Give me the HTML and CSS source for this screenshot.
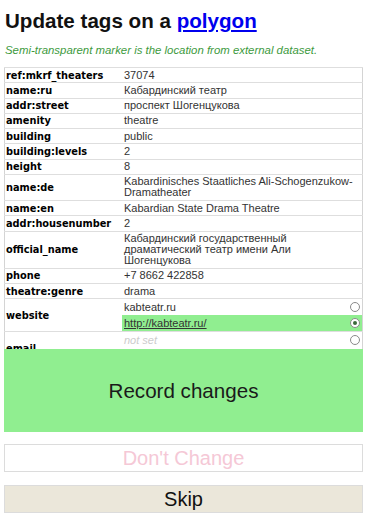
FILE: index.html
```html
<!DOCTYPE html>
<html lang="en">
<head>
  <meta charset="UTF-8">
  <meta name="viewport" content="width=device-width, initial-scale=1.0">
  <title>Update tags</title>
  <link rel="stylesheet" href="styles.css">
</head>
<body>
  <div class="page">
    <h1 class="title">Update tags on a <a href="#">polygon</a></h1>
    <div class="note">Semi-transparent marker is the location from external dataset.</div>

    <div class="tags-wrap">
      <table class="tags">
        <tr><td class="key">ref:mkrf_theaters</td><td class="val">37074</td></tr>
        <tr><td class="key">name:ru</td><td class="val">Кабардинский театр</td></tr>
        <tr><td class="key">addr:street</td><td class="val">проспект Шогенцукова</td></tr>
        <tr><td class="key">amenity</td><td class="val">theatre</td></tr>
        <tr><td class="key">building</td><td class="val">public</td></tr>
        <tr><td class="key">building:levels</td><td class="val">2</td></tr>
        <tr><td class="key">height</td><td class="val">8</td></tr>
        <tr><td class="key">name:de</td><td class="val">Kabardinisches Staatliches Ali-Schogenzukow-Dramatheater</td></tr>
        <tr><td class="key">name:en</td><td class="val">Kabardian State Drama Theatre</td></tr>
        <tr><td class="key">addr:housenumber</td><td class="val">2</td></tr>
        <tr><td class="key">official_name</td><td class="val">Кабардинский государственный драматический театр имени Али Шогенцукова</td></tr>
        <tr><td class="key">phone</td><td class="val">+7 8662 422858</td></tr>
        <tr><td class="key">theatre:genre</td><td class="val">drama</td></tr>
        <tr>
          <td class="key">website</td>
          <td class="choices">
            <label class="option"><span>kabteatr.ru</span><span class="radio"></span></label>
            <label class="option chosen"><a href="#">http://kabteatr.ru/</a><span class="radio on"></span></label>
          </td>
        </tr>
        <tr>
          <td class="key">email</td>
          <td class="choices">
            <label class="option"><span class="empty">not set</span><span class="radio"></span></label>
            <label class="option"><span>info@kabteatr.ru</span><span class="radio"></span></label>
          </td>
        </tr>
      </table>
    </div>

    <button class="btn btn-record">Record changes</button>
    <button class="btn btn-keep">Don't Change</button>
    <button class="btn btn-skip">Skip</button>
  </div>
</body>
</html>
```

FILE: styles.css
```css
body {
  margin: 0;
  background: #fff;
  font-family: "Liberation Sans", Arial, sans-serif;
  color: #111;
}

.page {
  padding: 0 11px 0 4px;
}

.title {
  font-size: 20.6px;
  line-height: 24px;
  margin: 9px 0 0 1px;
}
.title a {
  color: #0000ee;
}

.note {
  font-size: 11.4px;
  line-height: 13px;
  font-style: italic;
  color: #3d9a3d;
  margin: 11px 0 0 1px;
}

.tags-wrap {
  margin-top: 10px;
  height: 282px;
  overflow: hidden;
}

.tags {
  width: 100%;
  border-collapse: collapse;
  border: 1px solid #d4d4d4;
}
.tags td {
  border-top: 1px solid #dedede;
  font-size: 11px;
  line-height: 11px;
  padding: 1.625px 2px;
  vertical-align: middle;
  color: #333;
}
.tags td.key {
  width: 114px;
  padding-left: 1px;
  font-family: "DejaVu Sans", Verdana, sans-serif;
  font-size: 9.8px;
  font-weight: bold;
  color: #000;
}
.tags td.choices {
  padding: 0;
}

.option {
  display: flex;
  align-items: center;
  justify-content: space-between;
  padding: 2.5px 2px;
}
.option.chosen {
  background: #90ee90;
}
.option a {
  color: #333;
}
.empty {
  font-style: italic;
  color: #ccc;
}

.radio {
  width: 8px;
  height: 8px;
  border: 1px solid #8a8a8a;
  border-radius: 50%;
  background: #fff;
  position: relative;
}
.radio.on::after {
  content: "";
  position: absolute;
  left: 2px;
  top: 2px;
  width: 4px;
  height: 4px;
  border-radius: 50%;
  background: #3a6a3a;
}

.btn {
  display: block;
  width: 100%;
  font-family: "Liberation Sans", Arial, sans-serif;
  font-size: 20px;
  border: 1px solid #dcdcdc;
  margin: 0;
  padding: 0;
  cursor: pointer;
}
.btn-record {
  height: 83px;
  background: #90ee90;
  border: none;
  color: #1a1a1a;
  font-size: 20.6px;
}
.btn-keep {
  height: 28px;
  margin-top: 12px;
  background: #fff;
  color: #f5c8d6;
}
.btn-skip {
  height: 28px;
  margin-top: 13px;
  background: #ebe7da;
  color: #111;
}
```
